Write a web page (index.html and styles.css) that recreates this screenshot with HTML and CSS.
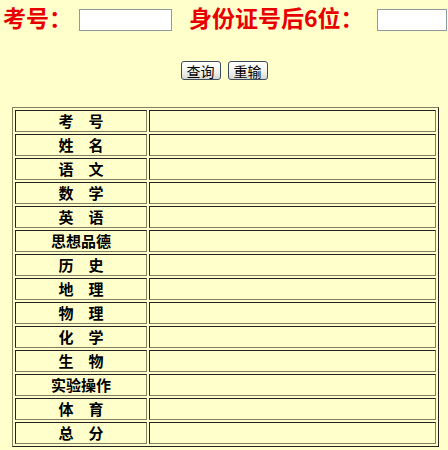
FILE: index.html
```html
<!DOCTYPE html>
<html lang="zh-CN">
<head>
<meta charset="utf-8">
<title>成绩查询</title>
<link rel="stylesheet" href="styles.css">
</head>
<body>
<form class="query">
  <div class="top">
    <span class="label">考号：</span>
    <input class="field field-id" type="text">
    <span class="label label-2">身份证号后6位：</span>
    <input class="field field-card" type="text">
  </div>
  <div class="actions">
    <button type="button" class="btn">查询</button>
    <button type="reset" class="btn">重输</button>
  </div>
</form>
<table class="scores">
  <tr><th>考　号</th><td></td></tr>
  <tr><th>姓　名</th><td></td></tr>
  <tr><th>语　文</th><td></td></tr>
  <tr><th>数　学</th><td></td></tr>
  <tr><th>英　语</th><td></td></tr>
  <tr><th>思想品德</th><td></td></tr>
  <tr><th>历　史</th><td></td></tr>
  <tr><th>地　理</th><td></td></tr>
  <tr><th>物　理</th><td></td></tr>
  <tr><th>化　学</th><td></td></tr>
  <tr><th>生　物</th><td></td></tr>
  <tr><th>实验操作</th><td></td></tr>
  <tr><th>体　育</th><td></td></tr>
  <tr><th>总　分</th><td></td></tr>
</table>
</body>
</html>
```
FILE: styles.css
```css
html, body {
  margin: 0;
  padding: 0;
  background: #ffffcc;
  font-family: "Noto Sans CJK SC", "Liberation Sans", sans-serif;
}

.query {
  margin: 0;
}

.top {
  display: flex;
  align-items: flex-start;
  height: 40px;
  padding-left: 3px;
}

.label {
  margin-top: 0;
  font-size: 23px;
  line-height: normal;
  font-weight: bold;
  color: #e80000;
  white-space: nowrap;
}

.label-2 {
  margin-left: 17px;
}

.field {
  box-sizing: border-box;
  margin: 9px 0 0 0;
  height: 22px;
  border: 1px solid #8c9c9c;
  background: #ffffff;
  padding: 0 2px;
}

.field-id {
  margin-left: 7px;
  width: 93px;
}

.field-card {
  margin-left: 13px;
  width: 70px;
}

.actions {
  display: flex;
  justify-content: center;
  gap: 7px;
  margin-top: 21px;
  height: 19px;
}

.btn {
  box-sizing: border-box;
  height: 19px;
  width: 40px;
  padding: 0;
  border: 1px solid #3c4c5c;
  border-radius: 3px;
  background: linear-gradient(#ffffff, #f2f2ec 60%, #d8d8d0);
  font-family: "Noto Sans CJK SC", sans-serif;
  font-size: 14px;
  line-height: 16px;
  color: #000;
}

.scores {
  margin: 27px 0 0 12px;
  border-collapse: separate;
  border-spacing: 2px;
  border: 1px solid;
  border-color: #808060 #222222 #222222 #808060;
}

.scores th,
.scores td {
  box-sizing: border-box;
  height: 22px;
  padding: 0;
  border: 1px solid;
  border-color: #222222 #808060 #808060 #222222;
}

.scores th {
  width: 132px;
  font-size: 15px;
  line-height: 18px;
  font-weight: bold;
  text-align: center;
  color: #000;
}

.scores td {
  width: 287px;
}
```
